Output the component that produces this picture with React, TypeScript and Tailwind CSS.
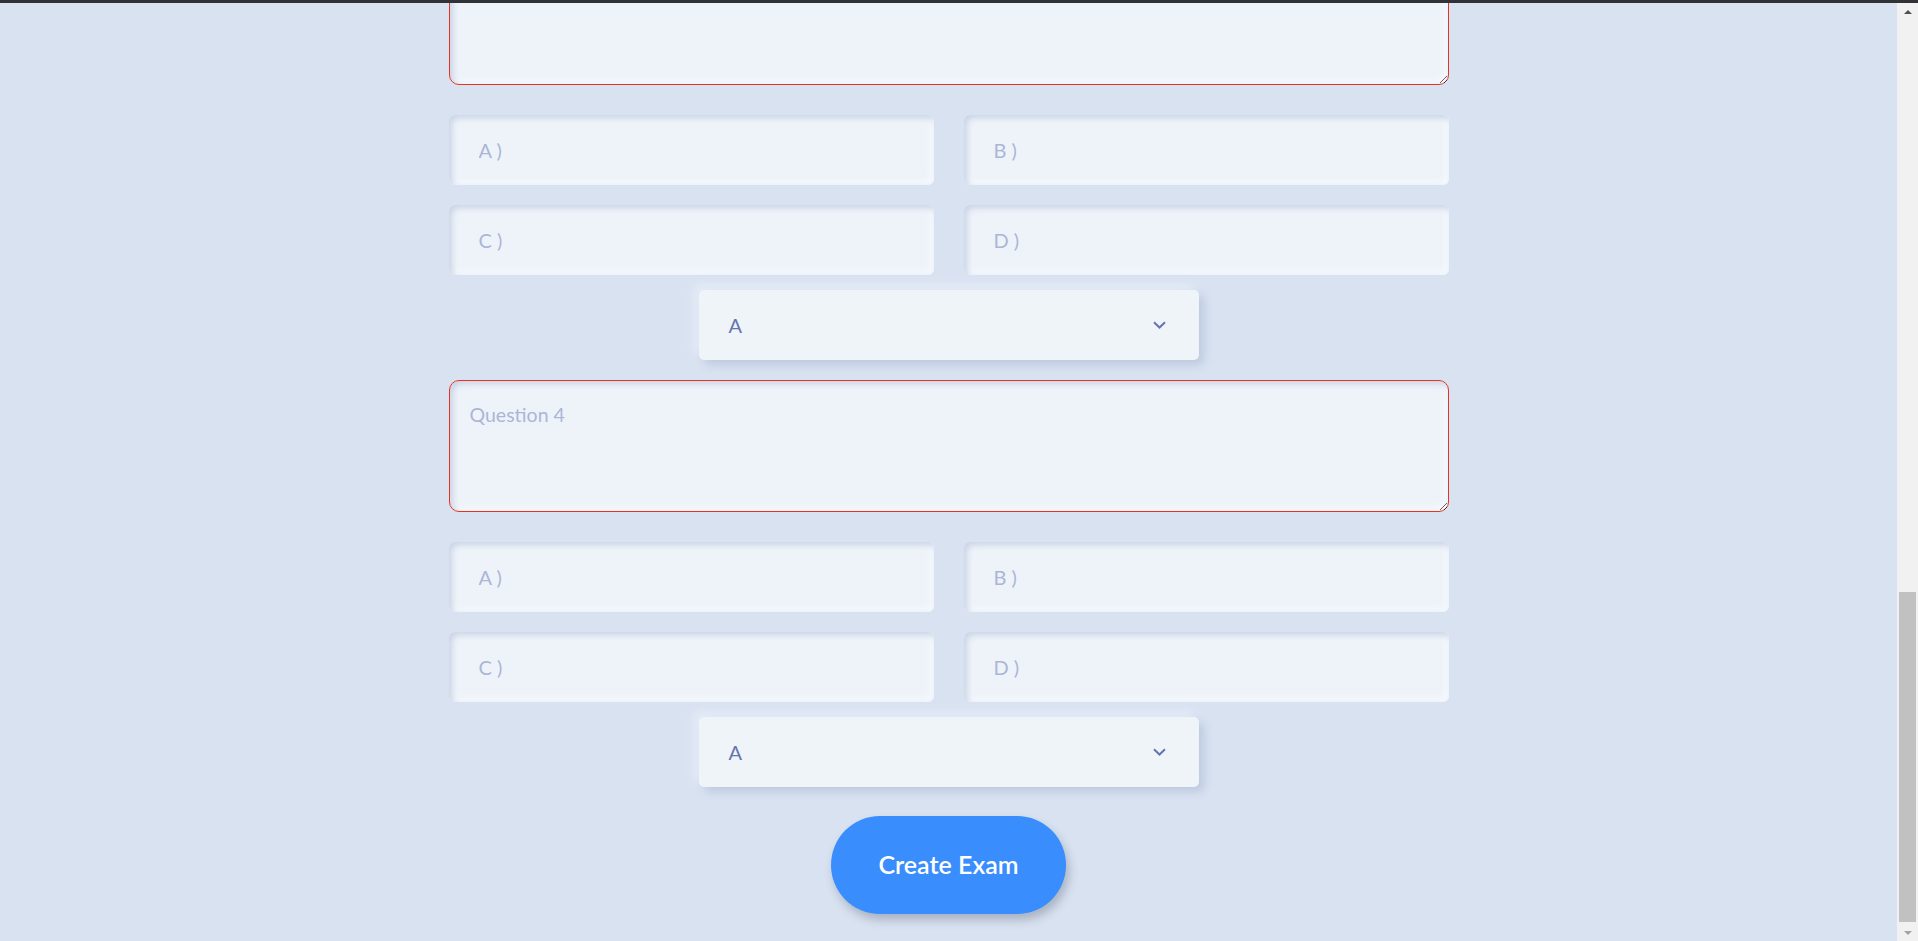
import React from 'react'

const options = ['A )', 'B )', 'C )', 'D )']

const Question = ({ n }: { n: number }) => {
  return (
    <div className="flex shrink-0 flex-col">
      <textarea
        placeholder={`Question ${n}`}
        className="h-[132px] w-full shrink-0 rounded-[10px] border border-[#e8341f] bg-[#eef3f9] px-[20px] py-[19px] text-[19.5px] text-[#6674b0] outline-none shadow-[inset_3px_3px_6px_#c9d3e6,inset_-3px_-3px_6px_#f7faff] placeholder:text-[#abb6d6]"
      />
      <div className="mt-[30px] grid grid-cols-2 gap-x-[30px] gap-y-[20px]">
        {options.map((o) => (
          <input
            key={o}
            placeholder={o}
            className="h-[70px] w-full rounded-[6px] bg-[#eef3f9] px-[30px] text-[20px] text-[#6674b0] outline-none shadow-[inset_3px_3px_6px_#c9d3e6,inset_-3px_-3px_6px_#f7faff] placeholder:text-[#abb6d6]"
          />
        ))}
      </div>
      <div className="mx-auto mt-[15px] flex h-[70px] w-[500px] items-center justify-between rounded-[5px] bg-[#eff4f9] pl-[30px] pr-[33px] text-[20px] text-[#6674b0] shadow-[5px_5px_10px_#bccadf,-5px_-5px_10px_#e6edf8]">
        <span>A</span>
        <svg width="13" height="8" viewBox="0 0 13 8" fill="none">
          <path d="M1 1.2 6.5 6.5 12 1.2" stroke="#6674b0" strokeWidth="2" />
        </svg>
      </div>
    </div>
  )
}

const Scrollbar = () => (
  <div className="flex w-[21px] shrink-0 flex-col bg-[#f1f1f1]">
    <div className="flex h-[17px] items-center justify-center">
      <div className="h-0 w-0 border-x-[4px] border-b-[4px] border-x-transparent border-b-[#505050]" />
    </div>
    <div className="flex flex-1 flex-col justify-end px-[2px] pb-[2px]">
      <div className="h-[330px] bg-[#c1c1c1]" />
    </div>
    <div className="flex h-[17px] items-center justify-center">
      <div className="h-0 w-0 border-x-[4px] border-t-[4px] border-x-transparent border-t-[#a3a3a3]" />
    </div>
  </div>
)

export default function App() {
  return (
    <div className="h-[941px] overflow-hidden bg-[#d9e2f1] font-['Lato',sans-serif]">
      <div className="h-[3px] bg-[#303236]" />
      <div className="flex h-[938px]">
        {/* page is scrolled to the bottom: content sits at the end and the top overflows */}
        <div className="flex flex-1 flex-col justify-end overflow-hidden pb-[27px]">
          <div className="mx-auto flex w-[1000px] shrink-0 flex-col gap-[20px]">
            <Question n={3} />
            <Question n={4} />
          </div>
          <button className="mx-auto mt-[29px] h-[98px] w-[235px] shrink-0 rounded-full bg-[#398dfd] text-[25px] font-semibold text-white shadow-[3px_6px_10px_rgba(60,70,90,0.3)]">
            Create Exam
          </button>
        </div>
        <Scrollbar />
      </div>
    </div>
  )
}
